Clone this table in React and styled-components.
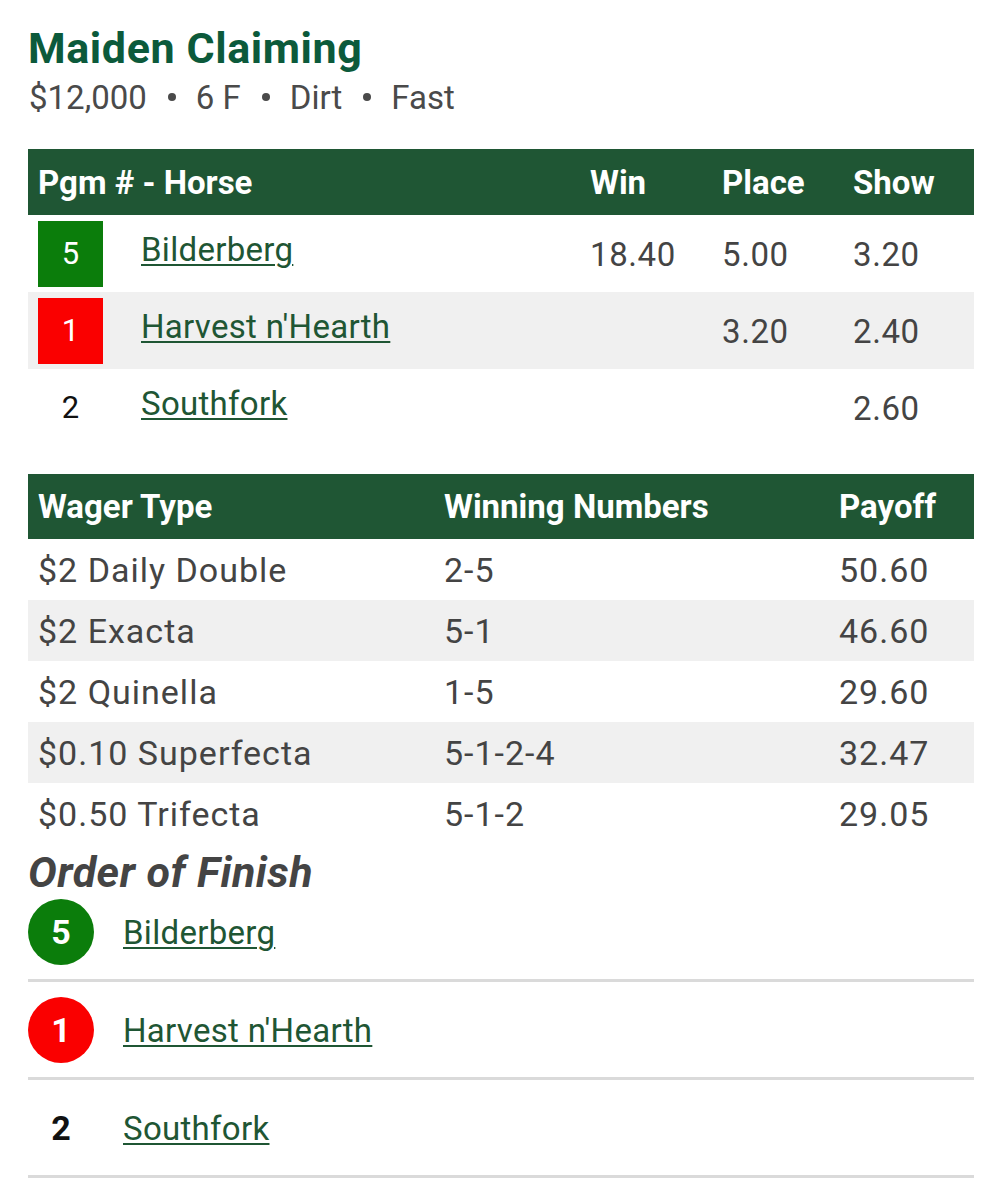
import React from "react";
import styled, { createGlobalStyle } from "styled-components";

const GlobalStyle = createGlobalStyle`
  *, *::before, *::after {
    box-sizing: border-box;
  }
  body {
    margin: 0;
    background: #fff;
    font-family: Roboto, "Liberation Sans", sans-serif;
    color: #444;
  }
`;

const horses = [
  { pgm: "5", name: "Bilderberg", win: "18.40", place: "5.00", show: "3.20", color: "#0b7d0b" },
  { pgm: "1", name: "Harvest n'Hearth", win: "", place: "3.20", show: "2.40", color: "#fa0000" },
  { pgm: "2", name: "Southfork", win: "", place: "", show: "2.60", color: null },
];

const wagers = [
  { type: "$2 Daily Double", numbers: "2-5", payoff: "50.60" },
  { type: "$2 Exacta", numbers: "5-1", payoff: "46.60" },
  { type: "$2 Quinella", numbers: "1-5", payoff: "29.60" },
  { type: "$0.10 Superfecta", numbers: "5-1-2-4", payoff: "32.47" },
  { type: "$0.50 Trifecta", numbers: "5-1-2", payoff: "29.05" },
];

const raceInfo = ["$12,000", "6 F", "Dirt", "Fast"];

export default function App() {
  return (
    <Page>
      <GlobalStyle />
      <Title>Maiden Claiming</Title>
      <Meta>
        {raceInfo.map((item, i) => (
          <React.Fragment key={item}>
            {i > 0 && <Dot />}
            {item}
          </React.Fragment>
        ))}
      </Meta>

      <ResultsTable>
        <HeadCell $span={2}>Pgm # - Horse</HeadCell>
        <HeadCell>Win</HeadCell>
        <HeadCell>Place</HeadCell>
        <HeadCell>Show</HeadCell>
        {horses.map((h, i) => (
          <React.Fragment key={h.pgm}>
            <Cell $odd={i % 2 === 1}>
              <PgmBox $color={h.color}>{h.pgm}</PgmBox>
            </Cell>
            <NameCell $odd={i % 2 === 1}>
              <HorseLink href="#">{h.name}</HorseLink>
            </NameCell>
            <ValueCell $odd={i % 2 === 1}>{h.win}</ValueCell>
            <ValueCell $odd={i % 2 === 1}>{h.place}</ValueCell>
            <ValueCell $odd={i % 2 === 1}>{h.show}</ValueCell>
          </React.Fragment>
        ))}
      </ResultsTable>

      <WagerTable>
        <WagerHead>Wager Type</WagerHead>
        <WagerHead>Winning Numbers</WagerHead>
        <WagerHead>Payoff</WagerHead>
        {wagers.map((w, i) => (
          <React.Fragment key={w.type}>
            <WagerCell $odd={i % 2 === 1}>{w.type}</WagerCell>
            <WagerCell $odd={i % 2 === 1}>{w.numbers}</WagerCell>
            <WagerCell $odd={i % 2 === 1}>{w.payoff}</WagerCell>
          </React.Fragment>
        ))}
      </WagerTable>

      <SectionTitle>Order of Finish</SectionTitle>
      <FinishList>
        {horses.map((h) => (
          <FinishRow key={h.pgm}>
            <Circle $color={h.color}>{h.pgm}</Circle>
            <HorseLink href="#">{h.name}</HorseLink>
          </FinishRow>
        ))}
      </FinishList>
    </Page>
  );
}

const Page = styled.div`
  width: 974px;
  padding: 20px 0 0 28px;
`;

const Title = styled.h1`
  margin: 0;
  font-size: 43px;
  font-weight: 700;
  letter-spacing: 0.6px;
  line-height: 56px;
  color: #0c5a3b;
`;

const Meta = styled.div`
  font-size: 33px;
  line-height: 44px;
  color: #4a4a4a;
  padding-left: 1px;
`;

const Dot = styled.span`
  display: inline-block;
  width: 8px;
  height: 8px;
  margin: 0 20px 0 21px;
  border-radius: 50%;
  background: #4a4a4a;
  vertical-align: 8px;
`;

const ResultsTable = styled.div`
  display: grid;
  grid-template-columns: 103px 449px 132px 131px 131px;
  margin-top: 29px;
`;

const HeadCell = styled.div`
  grid-column: span ${(p) => p.$span || 1};
  background: #1f5634;
  color: #fff;
  font-weight: 700;
  font-size: 33px;
  height: 66px;
  display: flex;
  align-items: center;
  padding-left: 10px;
`;

const Cell = styled.div`
  background: ${(p) => (p.$odd ? "#f0f0f0" : "#fff")};
  height: 77px;
  display: flex;
  align-items: center;
  padding-left: 10px;
  font-size: 33px;
`;

const PgmBox = styled.div`
  width: 65px;
  height: 66px;
  display: flex;
  align-items: center;
  justify-content: center;
  background: ${(p) => p.$color || "transparent"};
  color: ${(p) => (p.$color ? "#fff" : "#111")};
  font-size: 31px;
`;

const NameCell = styled(Cell)`
  padding-bottom: 9px;
`;

const ValueCell = styled(Cell)`
  color: #444;
  letter-spacing: 0.6px;
  padding-top: 2px;
`;

const HorseLink = styled.a`
  color: #1f5634;
  font-size: 33px;
  letter-spacing: 0.3px;
  text-decoration: underline;
  text-underline-offset: 3px;
  text-decoration-thickness: 2px;
`;

const WagerTable = styled.div`
  display: grid;
  grid-template-columns: 406px 395px 145px;
  margin-top: 28px;
`;

const WagerHead = styled.div`
  background: #1f5634;
  color: #fff;
  font-weight: 700;
  font-size: 33px;
  height: 65px;
  display: flex;
  align-items: center;
  padding-left: 10px;
`;

const WagerCell = styled.div`
  background: ${(p) => (p.$odd ? "#f0f0f0" : "#fff")};
  height: 61px;
  display: flex;
  align-items: center;
  padding-left: 10px;
  font-size: 34px;
  letter-spacing: 1px;
  color: #444;
`;

const SectionTitle = styled.h2`
  margin: 2px 0 0;
  font-size: 43px;
  font-style: italic;
  font-weight: 700;
  letter-spacing: 0.5px;
  line-height: 52px;
  color: #444;
`;

const FinishList = styled.div`
  display: flex;
  flex-direction: column;
`;

const FinishRow = styled.div`
  display: flex;
  align-items: center;
  gap: 29px;
  padding: 1px 0 14px;
  border-bottom: 3px solid #dadada;

  & + & {
    padding: 15px 0 14px;
  }
`;

const Circle = styled.div`
  flex: none;
  width: 66px;
  height: 66px;
  border-radius: 50%;
  display: flex;
  align-items: center;
  justify-content: center;
  background: ${(p) => p.$color || "transparent"};
  color: ${(p) => (p.$color ? "#fff" : "#111")};
  font-weight: 700;
  font-size: 34px;
`;
